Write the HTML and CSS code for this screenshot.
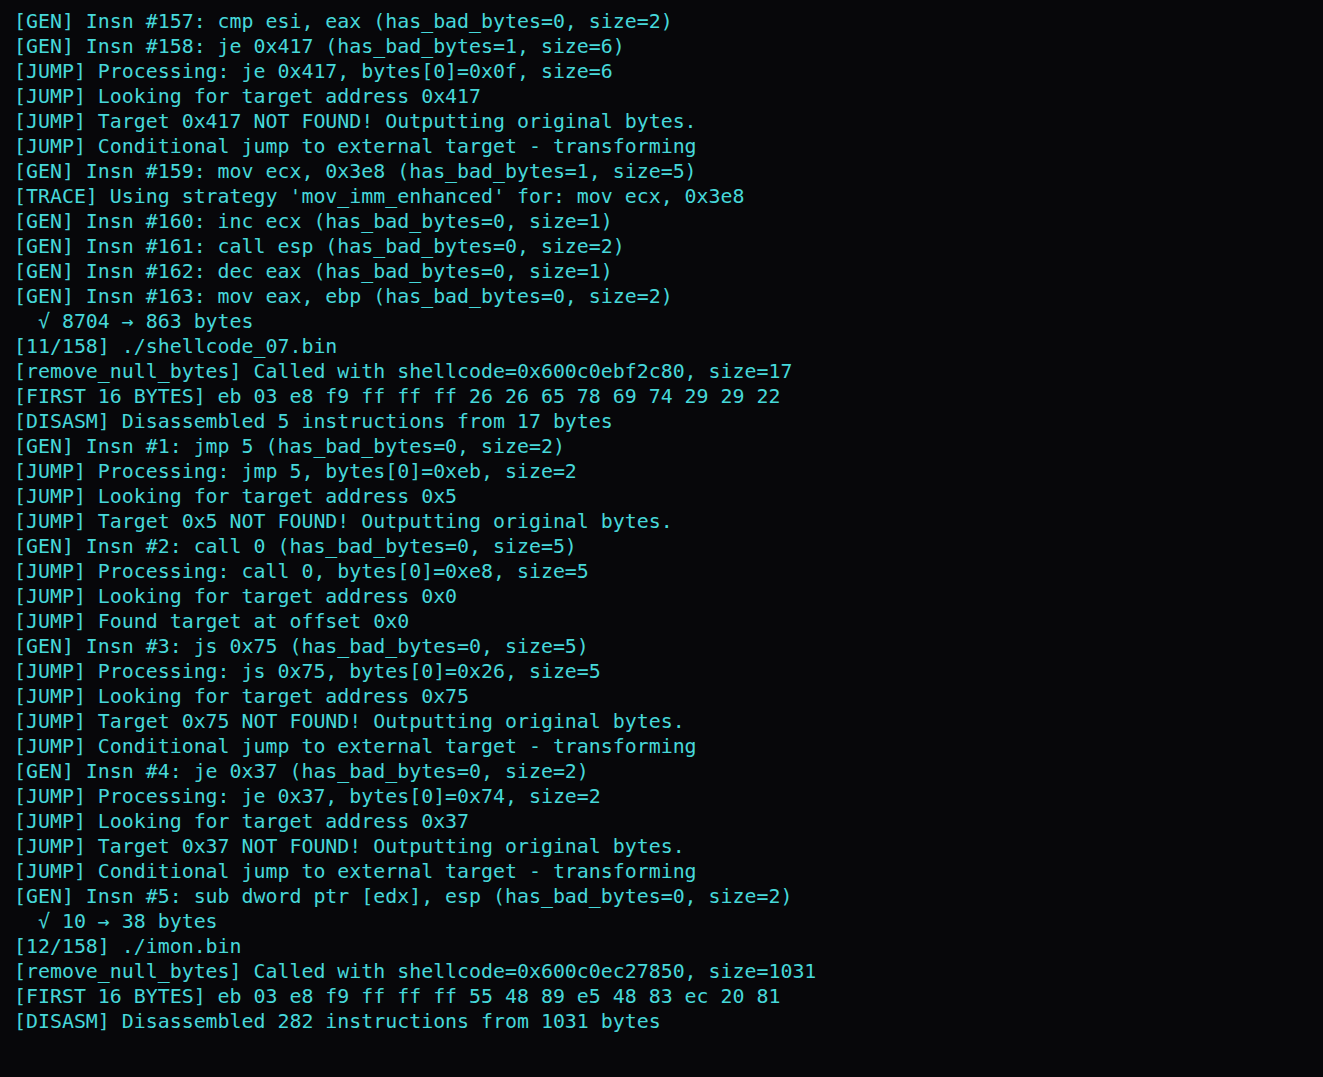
FILE: index.html
```html
<!DOCTYPE html>
<html>
<head>
<meta charset="utf-8">
<link rel="stylesheet" href="styles.css">
</head>
<body>
<pre class="term">[GEN] Insn #157: cmp esi, eax (has_bad_bytes=0, size=2)
[GEN] Insn #158: je 0x417 (has_bad_bytes=1, size=6)
[JUMP] Processing: je 0x417, bytes[0]=0x0f, size=6
[JUMP] Looking for target address 0x417
[JUMP] Target 0x417 NOT FOUND! Outputting original bytes.
[JUMP] Conditional jump to external target - transforming
[GEN] Insn #159: mov ecx, 0x3e8 (has_bad_bytes=1, size=5)
[TRACE] Using strategy 'mov_imm_enhanced' for: mov ecx, 0x3e8
[GEN] Insn #160: inc ecx (has_bad_bytes=0, size=1)
[GEN] Insn #161: call esp (has_bad_bytes=0, size=2)
[GEN] Insn #162: dec eax (has_bad_bytes=0, size=1)
[GEN] Insn #163: mov eax, ebp (has_bad_bytes=0, size=2)
  √ 8704 → 863 bytes
[11/158] ./shellcode_07.bin
[remove_null_bytes] Called with shellcode=0x600c0ebf2c80, size=17
[FIRST 16 BYTES] eb 03 e8 f9 ff ff ff 26 26 65 78 69 74 29 29 22
[DISASM] Disassembled 5 instructions from 17 bytes
[GEN] Insn #1: jmp 5 (has_bad_bytes=0, size=2)
[JUMP] Processing: jmp 5, bytes[0]=0xeb, size=2
[JUMP] Looking for target address 0x5
[JUMP] Target 0x5 NOT FOUND! Outputting original bytes.
[GEN] Insn #2: call 0 (has_bad_bytes=0, size=5)
[JUMP] Processing: call 0, bytes[0]=0xe8, size=5
[JUMP] Looking for target address 0x0
[JUMP] Found target at offset 0x0
[GEN] Insn #3: js 0x75 (has_bad_bytes=0, size=5)
[JUMP] Processing: js 0x75, bytes[0]=0x26, size=5
[JUMP] Looking for target address 0x75
[JUMP] Target 0x75 NOT FOUND! Outputting original bytes.
[JUMP] Conditional jump to external target - transforming
[GEN] Insn #4: je 0x37 (has_bad_bytes=0, size=2)
[JUMP] Processing: je 0x37, bytes[0]=0x74, size=2
[JUMP] Looking for target address 0x37
[JUMP] Target 0x37 NOT FOUND! Outputting original bytes.
[JUMP] Conditional jump to external target - transforming
[GEN] Insn #5: sub dword ptr [edx], esp (has_bad_bytes=0, size=2)
  √ 10 → 38 bytes
[12/158] ./imon.bin
[remove_null_bytes] Called with shellcode=0x600c0ec27850, size=1031
[FIRST 16 BYTES] eb 03 e8 f9 ff ff ff 55 48 89 e5 48 83 ec 20 81
[DISASM] Disassembled 282 instructions from 1031 bytes</pre>
</body>
</html>
```
FILE: styles.css
```css
html, body {
  margin: 0;
  padding: 0;
  background: #07070a;
  height: 100%;
}
body {
  overflow: hidden;
}
.term {
  margin: 0;
  padding: 9px 14px 0 14px;
  font-family: "DejaVu Sans Mono", "Liberation Mono", monospace;
  font-size: 19.9px;
  line-height: 25px;
  color: #46d8da;
  white-space: pre;
}
```
